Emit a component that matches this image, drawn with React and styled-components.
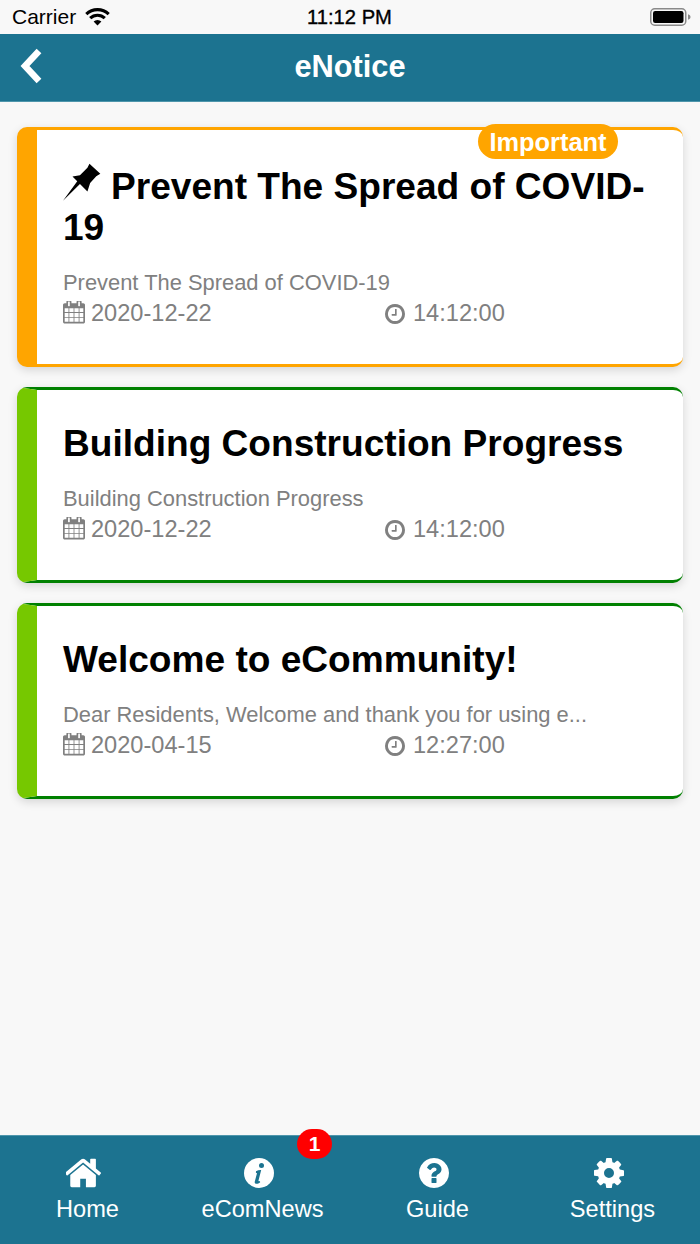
import React from "react"
import styled, { createGlobalStyle } from "styled-components"

const teal = "#1c7390"

const GlobalStyle = createGlobalStyle`
  html, body {
    margin: 0;
    padding: 0;
    background: #f8f8f8;
    font-family: "Liberation Sans", Arial, sans-serif;
  }
`

const Page = styled.div`
  width: 700px;
  height: 1244px;
  display: flex;
  flex-direction: column;
  overflow: hidden;
  background: #f8f8f8;
`

const StatusBar = styled.div`
  height: 34px;
  flex: none;
  display: grid;
  grid-template-columns: 1fr auto 1fr;
  align-items: center;
  padding: 0 9px 0 12px;
  font-size: 21px;
  color: #000;
`

const Carrier = styled.div`
  display: flex;
  align-items: center;
  gap: 9px;
`

const Clock = styled.div`
  font-size: 20.2px;
  margin-right: 4px;
  -webkit-text-stroke: 0.35px #000;
`

const Battery = styled.div`
  justify-self: end;
  display: flex;
`

const Header = styled.div`
  height: 67px;
  flex: none;
  display: flex;
  align-items: center;
  justify-content: center;
  position: relative;
  background: ${teal};
  border-bottom: 1px solid #4f96ac;
`

const BackIcon = styled.svg`
  position: absolute;
  left: 18px;
  top: 14px;
`

const Title = styled.div`
  font-size: 30.8px;
  font-weight: 700;
  color: #fff;
  margin-bottom: 2px;
`

const List = styled.div`
  flex: 1;
  display: flex;
  flex-direction: column;
  gap: 20px;
  padding: 25px 17px 0;
`

const Card = styled.div`
  position: relative;
  background: #fff;
  border-style: solid;
  border-width: 3px 0 3px 20px;
  border-color: ${p => p.$edge} ${p => p.$edge} ${p => p.$edge} ${p => p.$side};
  border-radius: 10px;
  padding: 33px 26px 34px;
  box-shadow: 0 3px 10px rgba(0, 0, 0, 0.14);
`

const Tag = styled.div`
  position: absolute;
  right: 65px;
  top: -6px;
  width: 140px;
  height: 35px;
  border-radius: 18px;
  background: #ffa500;
  color: #fff;
  font-size: 25.4px;
  font-weight: 700;
  line-height: 36px;
  text-align: center;
`

const Heading = styled.div`
  font-size: 37.1px;
  font-weight: 700;
  line-height: 41px;
  color: #000;
`

const Pin = styled.svg`
  vertical-align: -2px;
  margin-right: 10px;
`

const Desc = styled.div`
  margin-top: 21px;
  font-size: 21.9px;
  line-height: 28px;
  color: #808080;
`

const Meta = styled.div`
  display: grid;
  grid-template-columns: 322px 1fr;
  height: 33px;
  align-items: center;
`

const MetaItem = styled.div`
  display: flex;
  align-items: center;
  gap: ${p => p.$gap}px;
  font-size: 23.6px;
  color: #808080;
`

const CalendarSvg = styled.svg`
  margin-top: -2px;
`

const TabBar = styled.div`
  height: 108px;
  flex: none;
  display: grid;
  grid-template-columns: repeat(4, 175px);
  background: ${teal};
  border-top: 1px solid #4f96ac;
`

const Tab = styled.div`
  position: relative;
  display: flex;
  flex-direction: column;
  align-items: center;
  padding-top: 22px;
  gap: 8px;
  color: #fff;
  font-size: 23.6px;
`

const TabIcon = styled.div`
  height: 30px;
  display: flex;
  justify-content: center;
  padding-right: 7px;
`

const Badge = styled.div`
  position: absolute;
  left: 122px;
  top: -7px;
  width: 35px;
  height: 30px;
  border-radius: 15px;
  background: #f00;
  color: #fff;
  font-size: 21px;
  font-weight: 700;
  line-height: 30px;
  text-align: center;
`

const WifiSvg = styled.svg`
  margin-top: -2px;
`

const Wifi = () => (
  <WifiSvg width="25" height="19" viewBox="0 0 25 19" fill="none" stroke="#000" strokeWidth="3.1">
    <path d="M1.3 7.2a16 16 0 0 1 22.4 0" />
    <path d="M5.2 11.2a10.400 10.400 0 0 1 14.600 0" />
    <path d="M12.500 18.600 8.600 14.600a5.500 5.500 0 0 1 7.800 0z" fill="#000" stroke="none" />
  </WifiSvg>
)

const BatteryIcon = () => (
  <svg width="41" height="18" viewBox="0 0 41 18">
    <rect x="0.750" y="0.750" width="35" height="16.500" rx="4" fill="none" stroke="#8a8a8a" strokeWidth="1.500" />
    <rect x="3" y="3" width="30.500" height="12" rx="2.200" fill="#000" />
    <path d="M38 6.200c1.500.4 2.500 1.500 2.500 2.800s-1 2.400-2.500 2.800z" fill="#8a8a8a" />
  </svg>
)

const CalendarIcon = () => (
  <CalendarSvg width="22" height="23" viewBox="64 128 1664 1664" fill="#808080">
    <path d="M192 1664h288v-288h-288v288zm352 0h320v-288h-320v288zm-352-352h288v-320h-288v320zm352 0h320v-320h-320v320zm-352-384h288v-288h-288v288zm736 736h320v-288h-320v288zm-384-736h320v-288h-320v288zm768 736h288v-288h-288v288zm-384-352h320v-320h-320v320zm-352-864v-288q0-13-9.500-22.500t-22.500-9.500h-64q-13 0-22.500 9.500t-9.500 22.500v288q0 13 9.500 22.500t22.500 9.500h64q13 0 22.500-9.500t9.500-22.500zm736 864h288v-320h-288v320zm-384-384h320v-288h-320v288zm384 0h288v-288h-288v288zm32-480v-288q0-13-9.500-22.500t-22.500-9.500h-64q-13 0-22.500 9.500t-9.500 22.500v288q0 13 9.500 22.500t22.500 9.500h64q13 0 22.500-9.500t9.500-22.500zm384-64v1280q0 52-38 90t-90 38h-1408q-52 0-90-38t-38-90v-1280q0-52 38-90t90-38h128v-96q0-66 47-113t113-47h64q66 0 113 47t47 113v96h384v-96q0-66 47-113t113-47h64q66 0 113 47t47 113v96h128q52 0 90 38t38 90z" />
  </CalendarSvg>
)

const ClockIcon = () => (
  <svg width="20" height="20" viewBox="128 128 1536 1536" fill="#808080">
    <path d="M1024 544v448q0 14-9 23t-23 9h-320q-14 0-23-9t-9-23v-64q0-14 9-23t23-9h224v-352q0-14 9-23t23-9h64q14 0 23 9t9 23zm416 352q0-148-73-273t-198-198-273-73-273 73-198 198-73 273 73 273 198 198 273 73 273-73 198-198 73-273zm224 0q0 209-103 385.500t-279.500 279.500-385.500 103-385.500-103-279.500-279.500-103-385.500 103-385.500 279.500-279.500 385.500-103 385.500 103 279.500 279.500 103 385.500z" />
  </svg>
)

const HomeIcon = () => (
  <svg width="37" height="30" viewBox="64 224 1664 1344" fill="#fff">
    <path d="M1408 992v480q0 26-19 45t-45 19h-384v-384h-256v384h-384q-26 0-45-19t-19-45v-480q0-1 .5-3t.5-3l575-474 575 474q1 2 1 6zm223-69l-62 74q-8 9-21 11h-3q-13 0-21-7l-692-577-692 577q-12 8-24 7-13-2-21-11l-62-74q-8-10-7-23.500t11-21.500l719-599q32-26 76-26t76 26l244 204v-195q0-14 9-23t23-9h192q14 0 23 9t9 23v408l219 182q10 8 11 21.500t-7 23.500z" />
  </svg>
)

const InfoIcon = () => (
  <svg width="30" height="30" viewBox="0 0 30 30">
    <circle cx="15" cy="15" r="15" fill="#fff" />
    <circle cx="17.500" cy="7.600" r="2.500" fill={teal} />
    <path
      d="M12 13.200c1.600-.9 3.300-1.300 5.200-1.200l-2.700 10.500c-.2.800.4.900 1.400.4l.3 1.300c-1.500 1.200-2.900 1.700-4.200 1.500-1.100-.2-1.500-1-1.200-2.200l2.200-8.300-1.100-.4z"
      fill={teal}
    />
  </svg>
)

const GuideIcon = () => (
  <svg width="30" height="30" viewBox="128 128 1536 1536" fill="#fff">
    <path d="M1024 1376v-192q0-14-9-23t-23-9h-192q-14 0-23 9t-9 23v192q0 14 9 23t23 9h192q14 0 23-9t9-23zm256-672q0-88-55.500-163t-138.500-116-170-41q-243 0-371 213-15 24 8 42l132 100q7 6 19 6 16 0 25-12 53-68 86-92 34-24 86-24 48 0 85.500 26t37.500 59q0 38-20 61t-68 45q-63 28-115.500 86.500t-52.500 125.500v36q0 14 9 23t23 9h192q14 0 23-9t9-23q0-19 21.500-49.500t54.500-49.500q32-18 49-28.500t46-35 44.500-48 28-60.500 12.500-81zm384 192q0 209-103 385.500t-279.500 279.500-385.500 103-385.500-103-279.500-279.500-103-385.500 103-385.500 279.500-279.500 385.500-103 385.500 103 279.500 279.500 103 385.500z" />
  </svg>
)

const CogIcon = () => (
  <svg width="30" height="30" viewBox="128 128 1536 1536" fill="#fff">
    <path d="M1152 896q0-106-75-181t-181-75-181 75-75 181 75 181 181 75 181-75 75-181zm512-109v222q0 12-8 23t-20 13l-185 28q-19 54-39 91 35 50 107 138 10 12 10 25t-9 23q-27 37-99 108t-94 71q-12 0-26-9l-138-108q-44 23-91 38-16 136-29 186-7 28-36 28h-222q-14 0-24.500-8.500t-11.500-21.500l-28-184q-49-16-90-37l-141 107q-10 9-25 9-14 0-25-11-126-114-165-168-7-10-7-23 0-12 8-23 15-21 51-66.500t54-70.500q-27-50-41-99l-183-27q-13-2-21-12.500t-8-23.500v-222q0-12 8-23t19-13l186-28q14-46 39-92-40-57-107-138-10-12-10-24 0-10 9-23 26-36 98.500-107.500t94.500-71.500q13 0 26 10l138 107q44-23 91-38 16-136 29-186 7-28 36-28h222q14 0 24.500 8.500t11.500 21.500l28 184q49 16 90 37l142-107q9-9 24-9 13 0 25 10 129 119 165 170 7 8 7 22 0 12-8 23-15 21-51 66.500t-54 70.500q26 50 41 98l183 28q13 2 21 12.500t8 23.500z" />
  </svg>
)

const notices = [
  {
    title: "Prevent The Spread of COVID-19",
    desc: "Prevent The Spread of COVID-19",
    date: "2020-12-22",
    time: "14:12:00",
    important: true,
  },
  {
    title: "Building Construction Progress",
    desc: "Building Construction Progress",
    date: "2020-12-22",
    time: "14:12:00",
  },
  {
    title: "Welcome to eCommunity!",
    desc: "Dear Residents, Welcome and thank you for using e...",
    date: "2020-04-15",
    time: "12:27:00",
  },
]

const tabs = [
  { label: "Home", icon: <HomeIcon /> },
  { label: "eComNews", icon: <InfoIcon />, badge: 1 },
  { label: "Guide", icon: <GuideIcon /> },
  { label: "Settings", icon: <CogIcon /> },
]

const App = () => {
  return (
    <Page>
      <GlobalStyle />
      <StatusBar>
        <Carrier>
          Carrier
          <Wifi />
        </Carrier>
        <Clock>11:12 PM</Clock>
        <Battery>
          <BatteryIcon />
        </Battery>
      </StatusBar>
      <Header>
        <BackIcon width="26" height="36" viewBox="0 0 26 36" fill="none" stroke="#fff" strokeWidth="6.500">
          <path d="M21 3 7 18l14 15" />
        </BackIcon>
        <Title>eNotice</Title>
      </Header>
      <List>
        {notices.map(n => (
          <Card
            key={n.title}
            $edge={n.important ? "#ffa500" : "#008000"}
            $side={n.important ? "#ffa500" : "#76c800"}
          >
            {n.important && <Tag>Important</Tag>}
            <Heading>
              {n.important && (
                <Pin width="38" height="38" viewBox="190 146 112 112">
                  <path d="M190 257 232 200 218 186 240 182 262 160 268 148 300 178 288 185 270 205 262 230 240 208z" />
                </Pin>
              )}
              {n.title}
            </Heading>
            <Desc>{n.desc}</Desc>
            <Meta>
              <MetaItem $gap={6}>
                <CalendarIcon />
                {n.date}
              </MetaItem>
              <MetaItem $gap={8}>
                <ClockIcon />
                {n.time}
              </MetaItem>
            </Meta>
          </Card>
        ))}
      </List>
      <TabBar>
        {tabs.map(t => (
          <Tab key={t.label}>
            {t.badge && <Badge>{t.badge}</Badge>}
            <TabIcon>{t.icon}</TabIcon>
            {t.label}
          </Tab>
        ))}
      </TabBar>
    </Page>
  )
}

export default App
